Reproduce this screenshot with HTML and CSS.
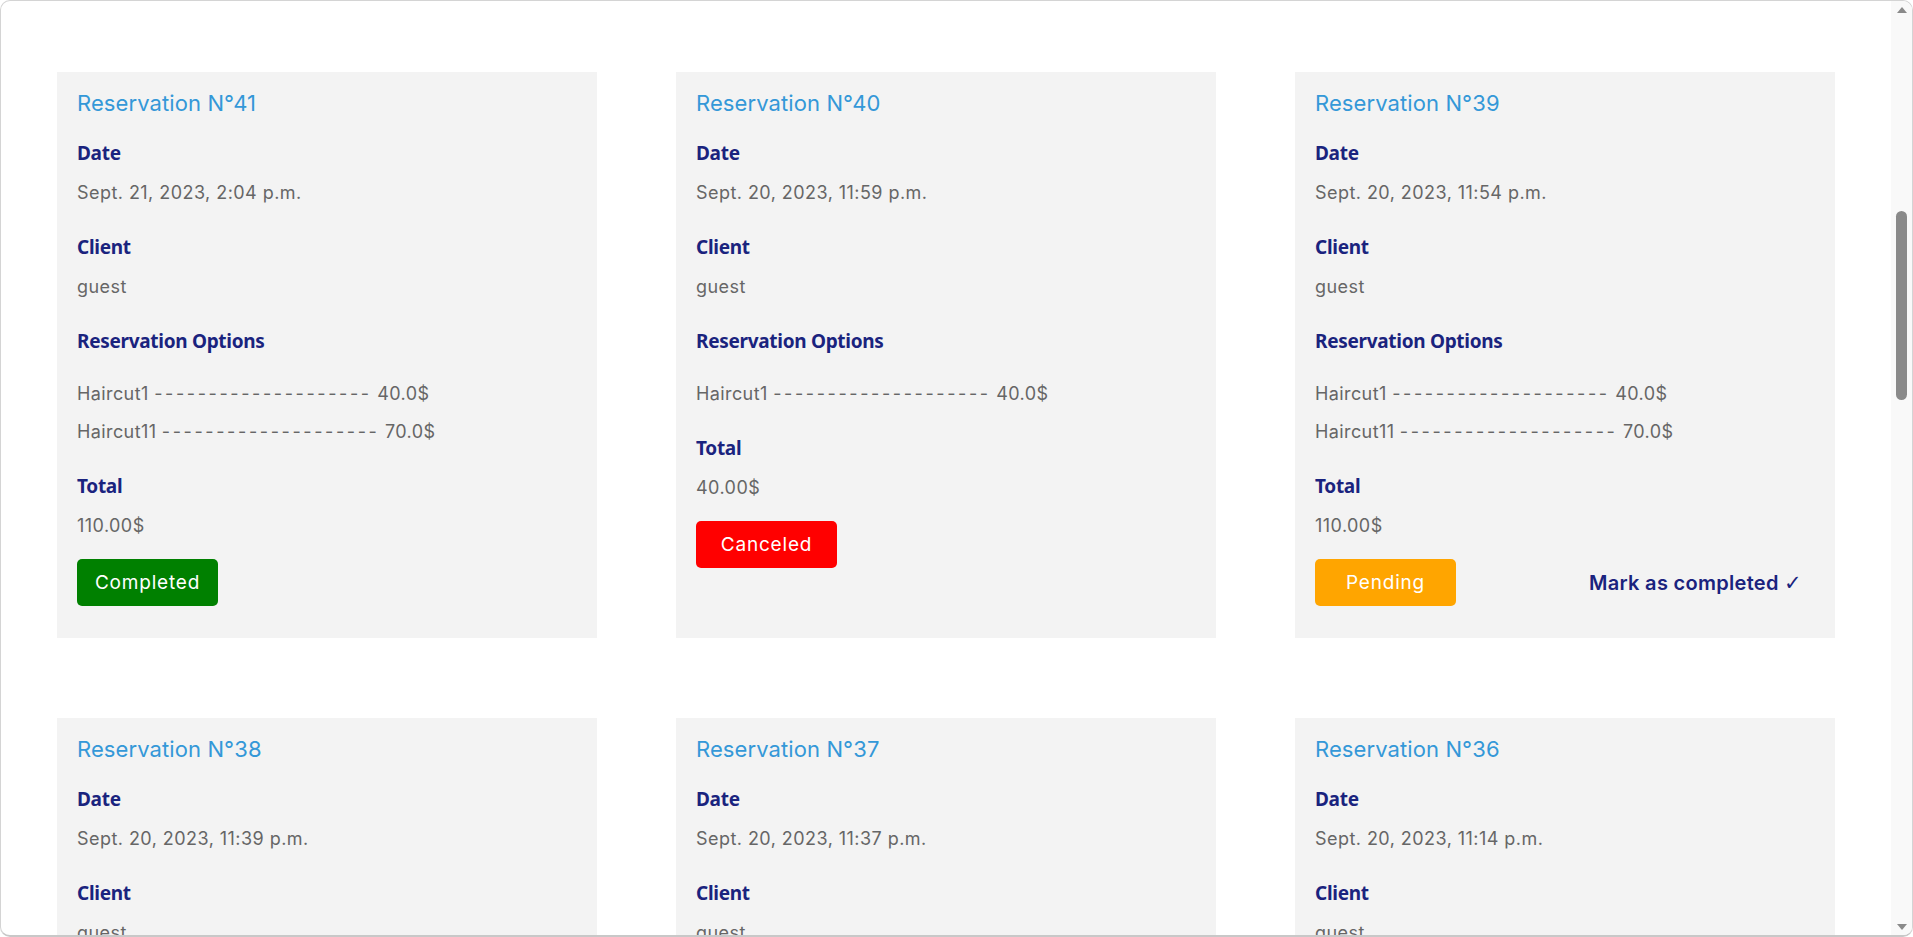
FILE: index.html
```html
<!DOCTYPE html>
<html lang="en">
<head>
<meta charset="utf-8">
<title>Reservations</title>
<link rel="stylesheet" href="styles.css">
</head>
<body>
<div class="window">
  <main class="page">
    <section class="grid">
      <article class="card">
        <h3 class="card-title">Reservation N°41</h3>
        <div class="field"><h4 class="label">Date</h4><p class="value">Sept. 21, 2023, 2:04 p.m.</p></div>
        <div class="field"><h4 class="label">Client</h4><p class="value">guest</p></div>
        <div class="field"><h4 class="label">Reservation Options</h4>
          <ul class="options"><li>Haircut1 <span class="dashes">--------------------</span> 40.0$</li><li>Haircut11 <span class="dashes">--------------------</span> 70.0$</li></ul></div>
        <div class="field"><h4 class="label">Total</h4><p class="value">110.00$</p></div>
        <div class="actions"><span class="status completed">Completed</span></div>
      </article>
      <article class="card">
        <h3 class="card-title">Reservation N°40</h3>
        <div class="field"><h4 class="label">Date</h4><p class="value">Sept. 20, 2023, 11:59 p.m.</p></div>
        <div class="field"><h4 class="label">Client</h4><p class="value">guest</p></div>
        <div class="field"><h4 class="label">Reservation Options</h4>
          <ul class="options"><li>Haircut1 <span class="dashes">--------------------</span> 40.0$</li></ul></div>
        <div class="field"><h4 class="label">Total</h4><p class="value">40.00$</p></div>
        <div class="actions"><span class="status canceled">Canceled</span></div>
      </article>
      <article class="card">
        <h3 class="card-title">Reservation N°39</h3>
        <div class="field"><h4 class="label">Date</h4><p class="value">Sept. 20, 2023, 11:54 p.m.</p></div>
        <div class="field"><h4 class="label">Client</h4><p class="value">guest</p></div>
        <div class="field"><h4 class="label">Reservation Options</h4>
          <ul class="options"><li>Haircut1 <span class="dashes">--------------------</span> 40.0$</li><li>Haircut11 <span class="dashes">--------------------</span> 70.0$</li></ul></div>
        <div class="field"><h4 class="label">Total</h4><p class="value">110.00$</p></div>
        <div class="actions"><span class="status pending">Pending</span><a class="mark" href="#">Mark as completed <span class="check">✓</span></a></div>
      </article>
      <article class="card">
        <h3 class="card-title">Reservation N°38</h3>
        <div class="field"><h4 class="label">Date</h4><p class="value">Sept. 20, 2023, 11:39 p.m.</p></div>
        <div class="field"><h4 class="label">Client</h4><p class="value">guest</p></div>
        <div class="field"><h4 class="label">Reservation Options</h4>
          <ul class="options"><li>Haircut1 <span class="dashes">--------------------</span> 40.0$</li></ul></div>
      </article>
      <article class="card">
        <h3 class="card-title">Reservation N°37</h3>
        <div class="field"><h4 class="label">Date</h4><p class="value">Sept. 20, 2023, 11:37 p.m.</p></div>
        <div class="field"><h4 class="label">Client</h4><p class="value">guest</p></div>
        <div class="field"><h4 class="label">Reservation Options</h4>
          <ul class="options"><li>Haircut1 <span class="dashes">--------------------</span> 40.0$</li></ul></div>
      </article>
      <article class="card">
        <h3 class="card-title">Reservation N°36</h3>
        <div class="field"><h4 class="label">Date</h4><p class="value">Sept. 20, 2023, 11:14 p.m.</p></div>
        <div class="field"><h4 class="label">Client</h4><p class="value">guest</p></div>
        <div class="field"><h4 class="label">Reservation Options</h4>
          <ul class="options"><li>Haircut1 <span class="dashes">--------------------</span> 40.0$</li></ul></div>
      </article>
    </section>
  </main>
  <div class="scrollbar" aria-hidden="true">
    <div class="sb-arrow"><svg width="10" height="6" viewBox="0 0 10 6"><path d="M0 6 L5 0 L10 6 Z" fill="#8a8a8a"/></svg></div>
    <div class="sb-track"><div class="sb-thumb"></div></div>
    <div class="sb-arrow"><svg width="10" height="6" viewBox="0 0 10 6"><path d="M0 0 L5 6 L10 0 Z" fill="#8a8a8a"/></svg></div>
  </div>
</div>
</body>
</html>
```

FILE: styles.css
```css
* { box-sizing: border-box; }

html, body {
  margin: 0;
  padding: 0;
  height: 937px;
  overflow: hidden;
  background: #ffffff;
}

body {
  font-family: "Inter", "Noto Sans", sans-serif;
  color: #666666;
}

.window {
  height: 937px;
  display: flex;
  border: 1px solid #d4d4d4;
  border-bottom: 2px solid #c8c8c8;
  border-radius: 10px;
  overflow: hidden;
  background: #ffffff;
}

.page {
  flex: 1;
  overflow: hidden;
  padding: 71px 56px 0;
}

.grid {
  display: grid;
  grid-template-columns: repeat(3, 1fr);
  column-gap: 79px;
  row-gap: 80px;
}

.card {
  background: #f3f3f3;
  padding: 16px 20px 32px;
  display: flex;
  flex-direction: column;
}

.card-title {
  margin: 0 0 23px;
  font-size: 22px;
  line-height: 30px;
  font-weight: 400;
  color: #3498d8;
  letter-spacing: 0.1px;
}

.field + .field { margin-top: 30px; }

.label {
  margin: 0 0 16px;
  font-family: "Noto Sans", sans-serif;
  font-weight: 700;
  font-size: 19px;
  line-height: 24px;
  color: #1a237e;
  letter-spacing: -0.3px;
}

.value {
  margin: 0;
  font-size: 18px;
  line-height: 24px;
  color: #666666;
  letter-spacing: 0.45px;
}

.options {
  list-style: none;
  margin: 29px 0 0;
  padding: 0;
  font-size: 18px;
  line-height: 24px;
  color: #666666;
  letter-spacing: 0.4px;
}

.options li + li { margin-top: 14px; }

.dashes { letter-spacing: 2.6px; }

.actions {
  margin-top: 21px;
  display: flex;
  align-items: center;
  justify-content: space-between;
}

.status {
  width: 141px;
  height: 47px;
  border-radius: 5px;
  display: flex;
  align-items: center;
  justify-content: center;
  color: #ffffff;
  font-size: 19px;
  letter-spacing: 0.8px;
}

.completed { background: #008000; }
.canceled { background: #ff0000; }
.pending { background: #ffa500; }

.mark {
  margin-right: 13px;
  font-size: 20px;
  font-weight: 600;
  letter-spacing: 0.3px;
  color: #1a237e;
  text-decoration: none;
}

.check {
  font-family: "DejaVu Sans", sans-serif;
  font-weight: 700;
  font-size: 21px;
}

.scrollbar {
  width: 21px;
  flex: none;
  background: #f9f9f9;
  display: flex;
  flex-direction: column;
}

.sb-arrow {
  height: 17px;
  display: flex;
  align-items: center;
  justify-content: center;
}

.sb-track {
  flex: 1;
  display: flex;
  justify-content: center;
}

.sb-thumb {
  margin-top: 193px;
  width: 11px;
  height: 189px;
  border-radius: 6px;
  background: #8a8a8a;
}
```
